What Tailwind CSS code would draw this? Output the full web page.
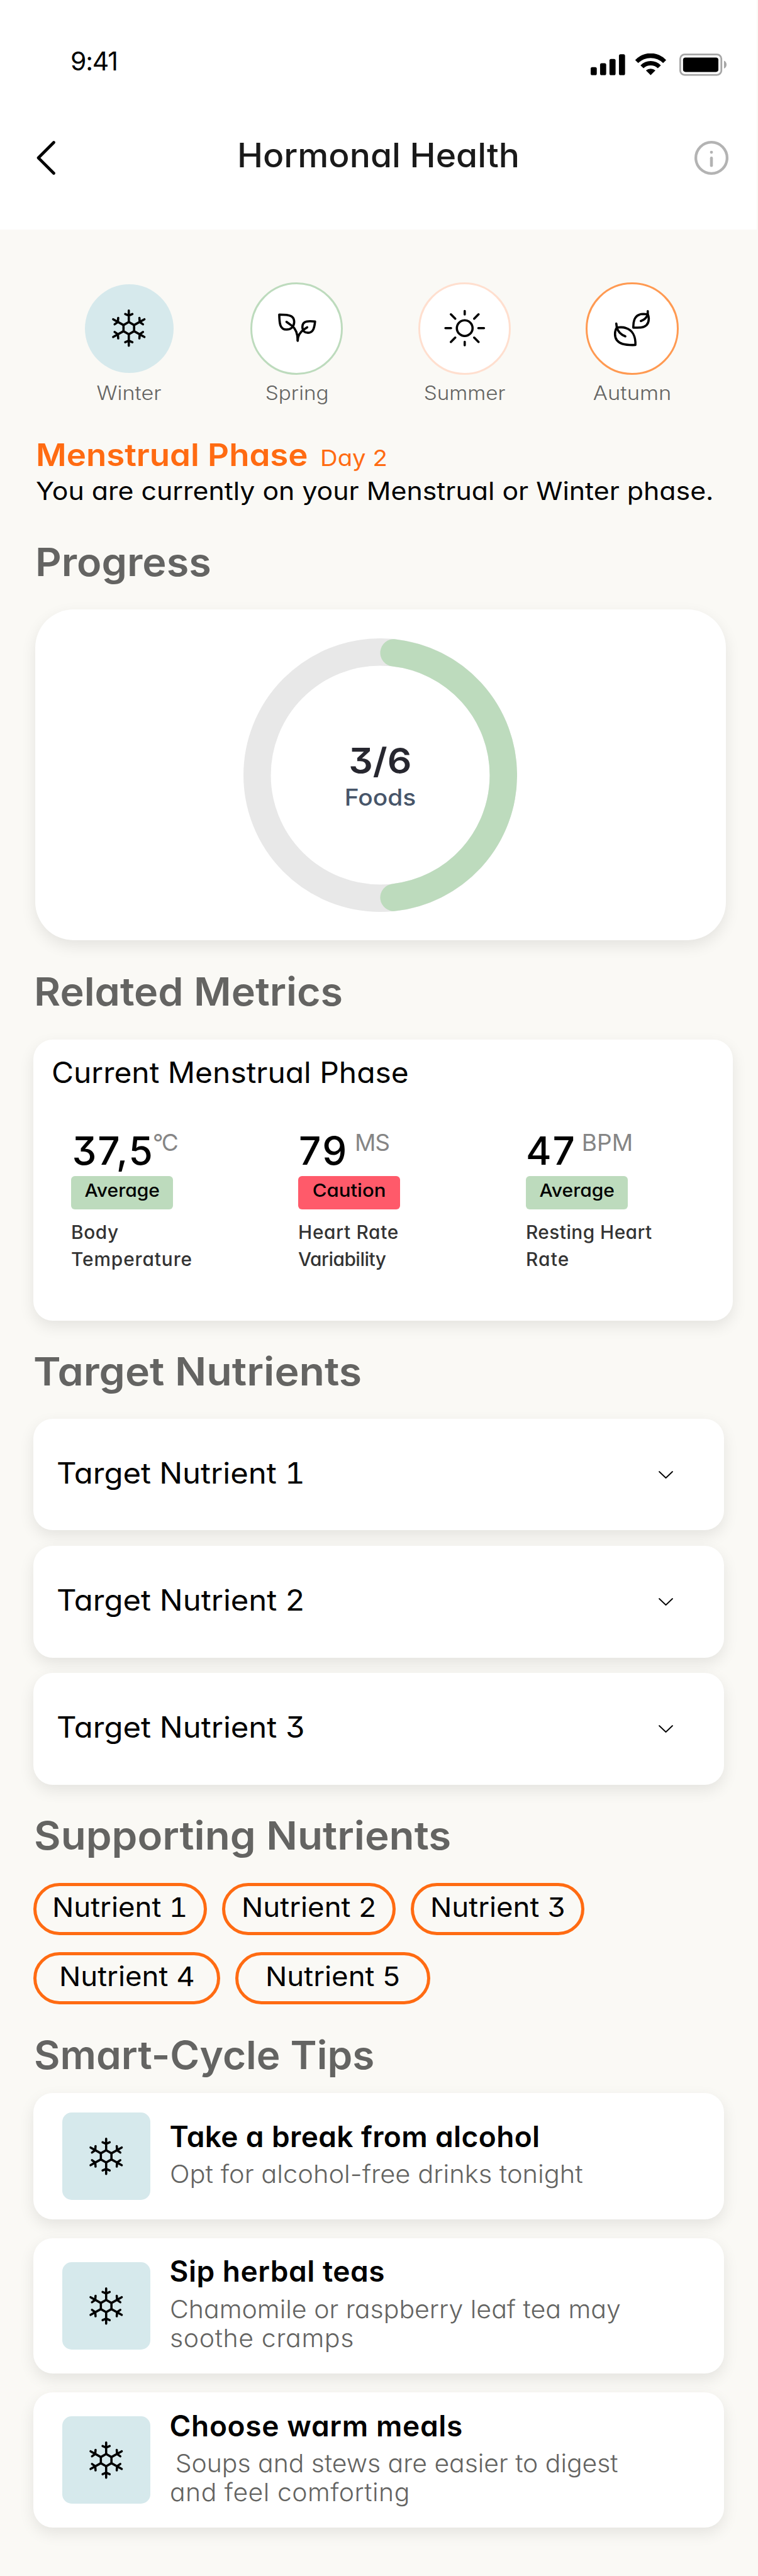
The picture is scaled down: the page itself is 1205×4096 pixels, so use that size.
<!DOCTYPE html>
<html lang="en">
<head>
<meta charset="utf-8">
<meta name="viewport" content="width=device-width, initial-scale=1">
<title>Hormonal Health</title>
<script src="https://cdn.jsdelivr.net/npm/@tailwindcss/browser@4"></script>
</head>
<body class="w-[1205px] h-[4096px] overflow-hidden bg-[#faf9f5] font-['Inter',sans-serif] [font-feature-settings:'cv11','cv09'] text-black whitespace-nowrap">

<svg class="hidden">
  <symbol id="flake" viewBox="-144 -144 288 288">
    <g fill="none" stroke="#000" stroke-width="14" stroke-linecap="round" stroke-linejoin="round">
      <path d="M0-38 33-19V19L0 38-33 19V-19Z"/>
      <path d="M0-38V-110M-22-88 0-78 22-88M0 38V110M-22 88 0 78 22 88"/>
      <path d="M33-19 97-55M66-64 68-38 88-24M33 19 97 55M66 64 68 38 88 24"/>
      <path d="M-33-19-97-55M-66-64-68-38-88-24M-33 19-97 55M-66 64-68 38-88 24"/>
    </g>
  </symbol>
  <symbol id="chevron" viewBox="0 0 23 12">
    <path d="M1 1 11.5 11 22 1" fill="none" stroke="#000" stroke-width="1.8" stroke-linecap="round" stroke-linejoin="round"/>
  </symbol>
</svg>

<header class="w-[1203px] h-[365px] bg-white flex flex-col">
  <div class="h-9 mt-[85px] pl-[112px] pr-[48px] flex items-start justify-between">
    <span class="text-[41px] leading-6 tracking-[-1.200px]">9:41</span>
    <svg class="w-[216.3px] h-[35.8px]" viewBox="84 62 847 140">
      <rect x="84" y="147" width="38" height="50" rx="10"/>
      <rect x="142.5" y="123" width="38" height="74" rx="10"/>
      <rect x="201" y="96" width="38" height="101" rx="10"/>
      <rect x="260" y="67" width="38" height="130" rx="10"/>
      <path d="M361 103A131 131 0 0 1 554 103L535 122A110 110 0 0 0 380 122Z"/>
      <path d="M394 136A88 88 0 0 1 521 136L502 154A66 66 0 0 0 413 154Z"/>
      <path d="M428 168A44 44 0 0 1 487 168L457.5 197Z"/>
      <rect x="641.5" y="68.500" width="256" height="127" rx="27" fill="none" stroke="#a6a6a6" stroke-width="11"/>
      <rect x="659" y="87" width="220" height="90" rx="15"/>
      <path d="M914 107C935 115 935 148 914 156Z" fill="#a6a6a6"/>
    </svg>
  </div>
  <div class="h-[54px] mt-[103px] pl-[57px] pr-[45px] grid grid-cols-[1fr_auto_1fr] items-center">
    <svg class="w-8 h-[54px]" viewBox="0 0 32 54"><path d="M28.500 2.500 4 27 28.500 51.500" fill="none" stroke="#000" stroke-width="4.6" stroke-linecap="round" stroke-linejoin="round"/></svg>
    <h1 class="text-[53px] leading-[46px] pb-2 pr-[12px] font-medium scale-x-[1.041] text-[#1a1a1a]">Hormonal Health</h1>
    <svg class="size-[54px] justify-self-end" viewBox="-106 -106 212 212" fill="none" stroke="#b3b3b3">
      <circle r="97.500" stroke-width="17"/>
      <path d="M0 1V48" stroke-width="18" stroke-linecap="round"/>
      <circle cy="-35" r="9.500" fill="#b3b3b3" stroke="none"/>
    </svg>
  </div>
</header>

<main>
  <nav class="pt-[83.500px] pl-[71.800px] w-[1138.400px] grid grid-cols-4 justify-items-center text-[30.500px] font-light leading-[34px] text-[#646462]">
    <div class="flex flex-col items-center gap-[12.500px]">
      <div class="size-[147.300px] grid place-items-center"><div class="size-[141.200px] rounded-full bg-[#d6e9ec] grid place-items-center"><svg class="size-[73.500px]"><use href="#flake"/></svg></div></div>
      <span class="scale-x-[1.120]">Winter</span>
    </div>
    <div class="flex flex-col items-center gap-[12.500px]">
      <div class="size-[147.300px] rounded-full bg-white border-3 border-[#bddbbd] grid place-items-center">
        <svg class="size-[73.500px]" viewBox="-144 -144 288 288" fill="none" stroke="#000" stroke-width="14" stroke-linecap="round" stroke-linejoin="round">
          <path d="M-109-84C-85-84-52-83-36-75-20-67-16-50-16-37-17-8-37 9-64 9-105 9-108-30-109-84Z"/>
          <path d="M-64-39-32-16C-8 2 6 35 6 78"/>
          <path d="M114-41C95-43 75-44 62-41 43-37 35-22 35-7 36 17 50 29 70 29 104 29 110-5 114-41Z"/>
          <path d="M65-5 44 9C20 26 6 50 6 78"/>
        </svg>
      </div>
      <span class="scale-x-[1.090]">Spring</span>
    </div>
    <div class="flex flex-col items-center gap-[12.500px]">
      <div class="size-[147.300px] rounded-full bg-white border-3 border-[#ffdfcf] grid place-items-center">
        <svg class="size-[73.500px]" viewBox="-144 -144 288 288" fill="none" stroke="#000" stroke-width="14" stroke-linecap="round">
          <circle r="49"/>
          <path d="M0-107V-85M0 85V107M-120 0H-85M85 0H120M-86-86-59-59M86-86 59-59M-86 86-59 59M86 86 59 59"/>
        </svg>
      </div>
      <span class="scale-x-[1.090]">Summer</span>
    </div>
    <div class="flex flex-col items-center gap-[12.500px]">
      <div class="size-[147.300px] rounded-full bg-white border-3 border-[#ff9a52] grid place-items-center">
        <svg class="size-[73.500px]" viewBox="-144 -144 288 288" fill="none" stroke="#000" stroke-width="14" stroke-linecap="round" stroke-linejoin="round">
          <path d="M21 105C-10 106-35 106-60 98-88 88-106 66-106 38-106 20-101 4-93-4-75-6-50-5-40-1 5 12 23 55 21 105Z"/>
          <path d="M-98-28-95-5C-88 22-66 42-42 51"/>
          <path d="M8-3C7-50 20-88 70-88L98-86C104-76 105-66 104-55 103-25 85-8 55-4 40-3 25-3 8-3Z"/>
          <path d="M98-106V-86C92-66 78-52 55-44"/>
        </svg>
      </div>
      <span class="scale-x-[1.130]">Autumn</span>
    </div>
  </nav>

  <section class="ml-[57px] mt-[52.300px]">
    <div class="h-[58px] flex items-baseline leading-[58px] text-[#ff6b12]">
      <h2 class="origin-left scale-x-[1.077] text-[49px] font-semibold">Menstrual Phase</h2>
      <span class="origin-left scale-x-[1.064] text-[36px] ml-[50.500px]">Day 2</span>
    </div>
    <p class="w-fit origin-left scale-x-[1.084] text-[39.500px] leading-[57.800px]">You are currently on your Menstrual or Winter phase.</p>
  </section>

  <section class="ml-[56px] mt-[45.700px]">
    <h2 class="w-fit origin-left scale-x-[1.045] text-[62px] leading-[75px] font-semibold text-[#646462]">Progress</h2>
    <div class="mt-[38px] w-[1097.500px] h-[526.400px] rounded-[61px] bg-white shadow-[0_9px_24px_rgba(0,0,0,0.09)] grid place-items-center">
      <svg class="col-start-1 row-start-1 size-[435px]" viewBox="-217.5 -217.5 435 435" fill="none" stroke-width="43.500">
        <circle r="195.700" stroke="#e8e8e8"/>
        <path d="M21.700-194.500A195.700 195.700 0 0 1 21.700 194.500" stroke="#bddbbd" stroke-linecap="round"/>
      </svg>
      <div class="col-start-1 row-start-1 pt-[9px] flex flex-col items-center">
        <span class="text-[56px] leading-[60px] font-semibold scale-x-[1.080] text-[#27272f]">3/6</span>
        <span class="mt-[2.800px] text-[36.700px] leading-[50px] font-medium scale-x-[1.060] text-[#475569]">Foods</span>
      </div>
    </div>
  </section>

  <section class="ml-[53px] mt-[43.600px]">
    <h2 class="pl-[1px] w-fit origin-left scale-x-[1.043] text-[62px] leading-[75px] font-semibold text-[#646462]">Related Metrics</h2>
    <div class="mt-[38.700px] w-[1112px] h-[447.300px] rounded-[31px] bg-white shadow-[0_9px_24px_rgba(0,0,0,0.09)] pt-[22px]">
      <h3 class="ml-[29px] w-fit origin-left scale-x-[1.042] text-[46px] leading-[60px]">Current Menstrual Phase</h3>
      <div class="mt-[65.600px] pl-[60px] grid grid-cols-[361px_362px_auto] justify-start">
        <div>
          <div class="h-[60px] flex items-start pl-[1.500px]"><span class="text-[62px] leading-[60px] font-medium tracking-[1.790px]">37,5</span><span class="text-[37px] leading-[34px] -ml-[2px] tracking-[-2.440px] text-[#858585]">°C</span></div>
          <div class="mt-[9.200px] w-[162px] h-[53.400px] rounded-md bg-[#bddbbd] pb-[6px] grid place-items-center text-[28.300px] font-medium"><span class="scale-x-[1.060]">Average</span></div>
          <p class="mt-[15px] text-[29.800px] leading-[42.600px] font-medium text-[#333]"><span class="tracking-[0.600px]">Body</span><br><span class="tracking-[0.910px]">Temperature</span></p>
        </div>
        <div>
          <div class="h-[60px] flex items-start pl-[1px]"><span class="text-[62px] leading-[60px] font-medium tracking-[2.500px]">79</span><span class="text-[37px] leading-[34px] ml-[10px] tracking-[-0.930px] text-[#858585]">MS</span></div>
          <div class="mt-[9.200px] w-[162px] h-[53.400px] rounded-md bg-[#ff5a6a] pb-[6px] grid place-items-center text-[28.300px] font-medium"><span class="scale-x-[1.100]">Caution</span></div>
          <p class="mt-[15px] text-[29.800px] leading-[42.600px] font-medium text-[#333]"><span class="tracking-[0.700px]">Heart Rate</span><br><span class="tracking-[-0.470px]">Variability</span></p>
        </div>
        <div>
          <div class="h-[60px] flex items-start"><span class="text-[62px] leading-[60px] font-medium tracking-[1.800px]">47</span><span class="text-[37px] leading-[34px] ml-[9px] tracking-[0.080px] text-[#858585]">BPM</span></div>
          <div class="mt-[9.200px] w-[162px] h-[53.400px] rounded-md bg-[#bddbbd] pb-[6px] grid place-items-center text-[28.300px] font-medium"><span class="scale-x-[1.060]">Average</span></div>
          <p class="mt-[15px] text-[29.800px] leading-[42.600px] font-medium text-[#333]"><span class="tracking-[0.450px]">Resting Heart</span><br><span class="tracking-[1.200px]">Rate</span></p>
        </div>
      </div>
    </div>
  </section>

  <section class="ml-[53px] mt-[42.700px]">
    <h2 class="w-fit origin-left scale-x-[1.067] text-[62px] leading-[75px] font-semibold text-[#646462]">Target Nutrients</h2>
    <div class="mt-[38.200px] w-[1097.500px] flex flex-col gap-[24.600px] text-[46px] leading-[60px]">
      <div class="h-[177.500px] rounded-[31px] bg-white shadow-[0_9px_24px_rgba(0,0,0,0.09)] pl-[37px] pr-[80.500px] flex items-center justify-between"><span class="pb-[5.500px] origin-left scale-x-[1.065] tabular-nums">Target Nutrient 1</span><svg class="w-[23px] h-3"><use href="#chevron"/></svg></div>
      <div class="h-[177.500px] rounded-[31px] bg-white shadow-[0_9px_24px_rgba(0,0,0,0.09)] pl-[37px] pr-[80.500px] flex items-center justify-between"><span class="pb-[5.500px] origin-left scale-x-[1.065]">Target Nutrient 2</span><svg class="w-[23px] h-3"><use href="#chevron"/></svg></div>
      <div class="h-[177.500px] rounded-[31px] bg-white shadow-[0_9px_24px_rgba(0,0,0,0.09)] pl-[37px] pr-[80.500px] flex items-center justify-between"><span class="pb-[5.500px] origin-left scale-x-[1.065]">Target Nutrient 3</span><svg class="w-[23px] h-3"><use href="#chevron"/></svg></div>
    </div>
  </section>

  <section class="ml-[53px] mt-[43.300px]">
    <h2 class="pl-[1px] w-fit origin-left scale-x-[1.056] text-[62px] leading-[75px] font-semibold text-[#646462]">Supporting Nutrients</h2>
    <div class="mt-[38.100px] flex flex-col gap-[27px] text-[43px] leading-[60px]">
      <div class="flex gap-[24.200px]">
        <div class="w-[276px] h-[83.200px] rounded-full border-5 border-[#ff6b12] pb-[7px] grid place-items-center"><span class="scale-x-[1.060] tabular-nums">Nutrient 1</span></div>
        <div class="w-[276px] h-[83.200px] rounded-full border-5 border-[#ff6b12] pb-[7px] grid place-items-center"><span class="scale-x-[1.060]">Nutrient 2</span></div>
        <div class="w-[276px] h-[83.200px] rounded-full border-5 border-[#ff6b12] pb-[7px] grid place-items-center"><span class="scale-x-[1.060]">Nutrient 3</span></div>
      </div>
      <div class="flex gap-[23.500px]">
        <div class="w-[297px] h-[83.200px] rounded-full border-5 border-[#ff6b12] pb-[7px] grid place-items-center"><span class="scale-x-[1.060]">Nutrient 4</span></div>
        <div class="w-[310.500px] h-[83.200px] rounded-full border-5 border-[#ff6b12] pb-[7px] grid place-items-center"><span class="scale-x-[1.060]">Nutrient 5</span></div>
      </div>
    </div>
  </section>

  <section class="ml-[53px] mt-[42.800px]">
    <h2 class="pl-[1px] w-fit origin-left scale-x-[1.029] text-[62px] leading-[75px] font-semibold text-[#646462]">Smart-Cycle Tips</h2>
    <div class="mt-[23px] w-[1097.500px] flex flex-col gap-[30.400px]">
      <article class="h-[200.400px] rounded-[31px] bg-white shadow-[0_9px_24px_rgba(0,0,0,0.09)] pl-[46px] flex items-start gap-[31px]">
        <div class="mt-[30.500px] size-[139.500px] rounded-[15px] bg-[#d6e9ec] grid place-items-center"><svg class="size-[73.500px]"><use href="#flake"/></svg></div>
        <div class="mt-[38.500px]">
          <h3 class="text-[46px] leading-[60px] font-semibold tracking-[0.390px]">Take a break from alcohol</h3>
          <p class="mt-[7.300px] w-fit origin-left scale-x-[1.045] text-[39.800px] leading-[46px] font-light text-[#646462]">Opt for alcohol-free drinks tonight</p>
        </div>
      </article>
      <article class="h-[214.800px] rounded-[31px] bg-white shadow-[0_9px_24px_rgba(0,0,0,0.09)] pl-[46px] flex items-start gap-[31px]">
        <div class="mt-[37.700px] size-[139.500px] rounded-[15px] bg-[#d6e9ec] grid place-items-center"><svg class="size-[73.500px]"><use href="#flake"/></svg></div>
        <div class="mt-[22.500px]">
          <h3 class="text-[46px] leading-[60px] font-semibold tracking-[0.530px]">Sip herbal teas</h3>
          <p class="mt-[7.300px] w-fit origin-left scale-x-[1.031] text-[39.800px] leading-[46px] font-light text-[#646462]">Chamomile or raspberry leaf tea may<br><span class="tracking-[0.600px]">soothe cramps</span></p>
        </div>
      </article>
      <article class="h-[214.800px] rounded-[31px] bg-white shadow-[0_9px_24px_rgba(0,0,0,0.09)] pl-[46px] flex items-start gap-[31px]">
        <div class="mt-[37.700px] size-[139.500px] rounded-[15px] bg-[#d6e9ec] grid place-items-center"><svg class="size-[73.500px]"><use href="#flake"/></svg></div>
        <div class="mt-[22.500px]">
          <h3 class="text-[46px] leading-[60px] font-semibold tracking-[0.670px]">Choose warm meals</h3>
          <p class="mt-[7.300px] w-fit origin-left scale-x-[1.027] text-[39.800px] leading-[46px] font-light text-[#646462]"><span class="pl-[8.500px]">Soups and stews are easier to digest</span><br><span class="tracking-[0.500px]">and feel comforting</span></p>
        </div>
      </article>
    </div>
  </section>
</main>
</body>
</html>
